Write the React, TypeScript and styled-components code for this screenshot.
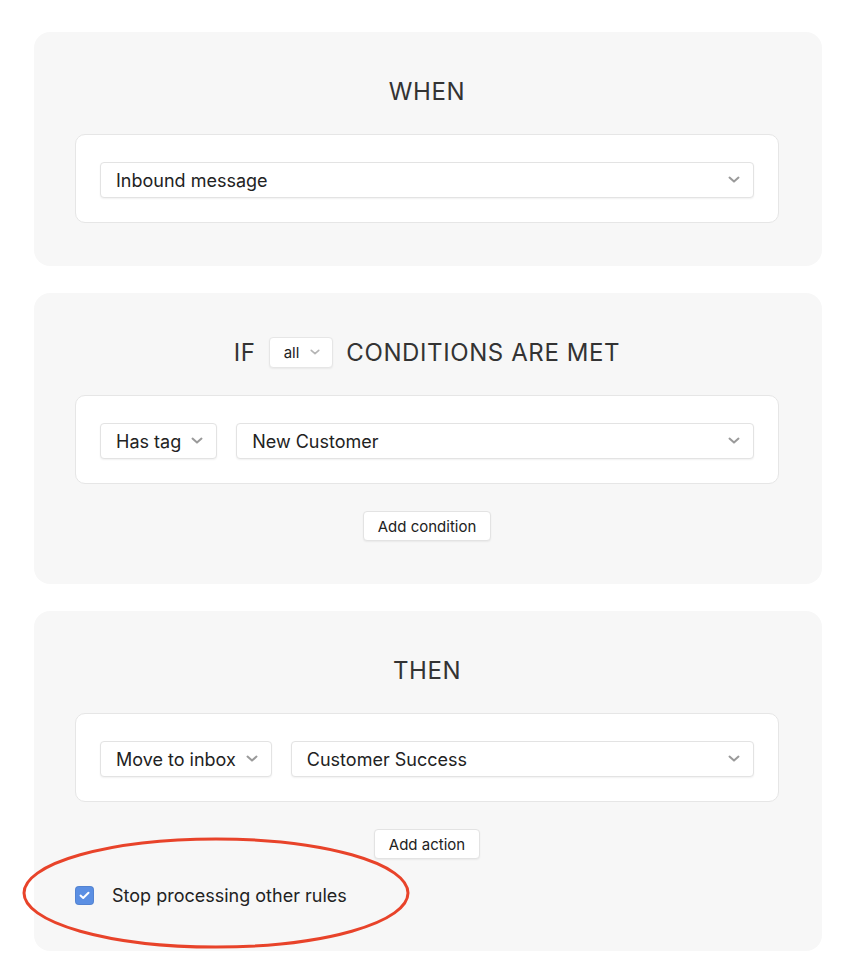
import React from "react";
import styled, { createGlobalStyle } from "styled-components";

const GlobalStyle = createGlobalStyle`
  body {
    margin: 0;
    background: #ffffff;
    font-family: Inter, "Noto Sans", "Liberation Sans", sans-serif;
    color: #222;
  }
`

const Page = styled.div`
  width: 788px;
  padding: 32px 0 20px 34px;
  display: flex;
  flex-direction: column;
  row-gap: 27px;
`
const Panel = styled.section`
  position: relative;
  background: #f7f7f7;
  border-radius: 16px;
  padding: 41px 43px 43px 41px;
  display: flex;
  flex-direction: column;
  align-items: center;
`
const Title = styled.h2`
  margin: 0 0 25px;
  height: 36px;
  display: flex;
  align-items: center;
  column-gap: 13px;
  font-size: 24px;
  font-weight: 400;
  letter-spacing: 0.6px;
  color: #333;
  text-transform: uppercase;
`
const Card = styled.div`
  align-self: stretch;
  background: #fff;
  border: 1px solid #e6e6e6;
  border-radius: 10px;
  padding: 27px 24px 24px;
  display: flex;
  column-gap: 19px;
`
const Select = styled.div<{ $grow?: boolean }>`
  flex: ${(p) => (p.$grow ? "1" : "none")};
  height: 36px;
  box-sizing: border-box;
  background: #fff;
  border: 1px solid #e3e3e3;
  border-radius: 4px;
  box-shadow: 0 1px 2px rgba(0, 0, 0, 0.06);
  padding: 0 13px 0 15px;
  display: flex;
  align-items: center;
  justify-content: space-between;
  column-gap: 10px;
  font-size: 18px;
  color: #222;
`
const MiniSelect = styled.div`
  height: 31px;
  box-sizing: border-box;
  background: #fff;
  border: 1px solid #e6e6e6;
  border-radius: 4px;
  box-shadow: 0 1px 2px rgba(0, 0, 0, 0.06);
  padding: 0 12px 0 14px;
  display: flex;
  align-items: center;
  column-gap: 11px;
  font-size: 15px;
  letter-spacing: 0;
  color: #222;
  text-transform: none;
`
const Button = styled.button`
  margin-top: 27px;
  height: 30px;
  padding: 0 14px;
  background: #fff;
  border: 1px solid #e3e3e3;
  border-radius: 4px;
  box-shadow: 0 1px 2px rgba(0, 0, 0, 0.06);
  font-family: inherit;
  font-size: 15px;
  color: #222;
`
const CheckRow = styled.label`
  align-self: flex-start;
  margin-top: 26px;
  margin-bottom: 2px;
  display: flex;
  align-items: center;
  column-gap: 18px;
  font-size: 18px;
  color: #222;
`
const Box = styled.span`
  width: 19px;
  height: 19px;
  border-radius: 4px;
  background: #5b8fe3;
  box-shadow: inset 0 0 0 1px rgba(0, 0, 0, 0.08);
  display: flex;
  align-items: center;
  justify-content: center;
`
const Ellipse = styled.svg`
  position: absolute;
  left: -12px;
  bottom: 2px;
  overflow: visible;
  pointer-events: none;
`

const Chevron: React.FC<{ size?: number; color?: string }> = ({ size = 12, color = "#9a9a9a" }) => (
  <svg width={size} height={size * 0.6} viewBox="0 0 12 7" fill="none">
    <path d="M1.5 1.5 L6 5.5 L10.5 1.5" stroke={color} strokeWidth="2" strokeLinecap="round" strokeLinejoin="round" />
  </svg>
)

const Dropdown: React.FC<{ label: string; grow?: boolean }> = ({ label, grow }) => (
  <Select $grow={grow}>
    <span>{label}</span>
    <Chevron />
  </Select>
)

export default function App() {
  return (
    <>
      <GlobalStyle />
      <Page>
        <Panel>
          <Title>When</Title>
          <Card>
            <Dropdown label="Inbound message" grow />
          </Card>
        </Panel>

        <Panel>
          <Title>
            <span>If</span>
            <MiniSelect>
              all <Chevron size={10} color="#b5b5b5" />
            </MiniSelect>
            <span>Conditions are met</span>
          </Title>
          <Card>
            <Dropdown label="Has tag" />
            <Dropdown label="New Customer" grow />
          </Card>
          <Button>Add condition</Button>
        </Panel>

        <Panel>
          <Title>Then</Title>
          <Card>
            <Dropdown label="Move to inbox" />
            <Dropdown label="Customer Success" grow />
          </Card>
          <Button>Add action</Button>
          <CheckRow>
            <Box>
              <svg width="11" height="9" viewBox="0 0 11 9" fill="none">
                <path d="M1.5 4.6 L4.2 7 L9.5 1.8" stroke="#fff" strokeWidth="2" strokeLinecap="round" strokeLinejoin="round" />
              </svg>
            </Box>
            Stop processing other rules
          </CheckRow>
          <Ellipse width="388" height="112" viewBox="0 0 388 112">
            <ellipse cx="194" cy="56" rx="192" ry="54" fill="none" stroke="#e8432a" strokeWidth="3" />
          </Ellipse>
        </Panel>
      </Page>
    </>
  );
}
